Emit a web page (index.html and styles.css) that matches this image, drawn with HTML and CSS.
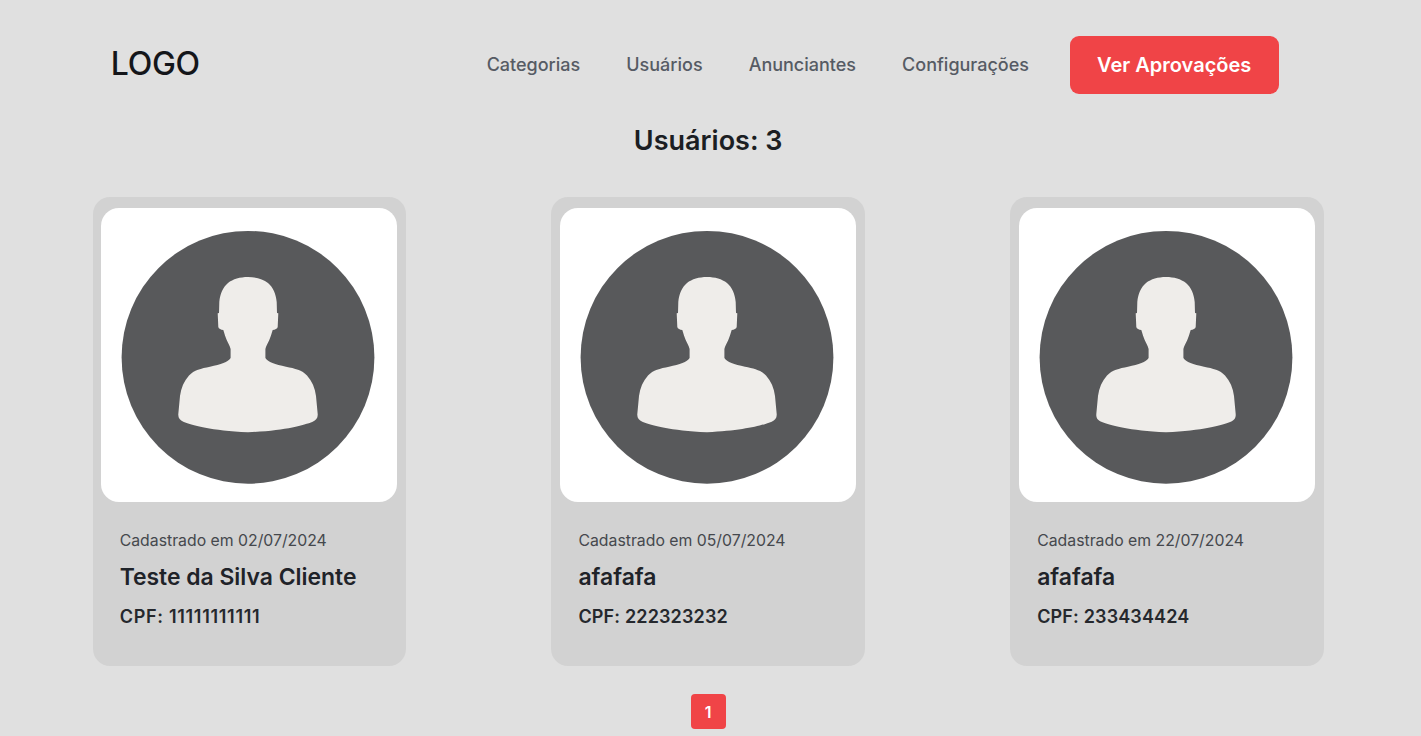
FILE: index.html
```html
<!DOCTYPE html>
<html lang="pt-BR">
<head>
  <meta charset="UTF-8">
  <meta name="viewport" content="width=device-width, initial-scale=1.0">
  <title>Usuários</title>
  <link rel="stylesheet" href="styles.css">
</head>
<body>
  <svg class="icon-defs" width="0" height="0" aria-hidden="true">
    <symbol id="avatar" viewBox="0 0 296 294">
      <circle cx="147" cy="149.3" r="126.4" fill="#58595b"/>
      <path fill="#efedea" d="M147 69C139 69 132 71 127 75C122 79 119 86 118.3 94L118 105L116.7 105.3L117.3 119C117.6 121 120 121.6 122.3 122C123.5 126 124.5 129 125.7 132C127 135 129 138 129.6 141L129.6 150C127 154 120 156.5 109 158.7C100 160.5 93 162 88 167.5C83 173 80 180 79 188L77.3 206C77 210 79 212.5 82.3 213.7C92 217.5 110 222.5 147 224.3C184 222.5 202 217.5 211.7 213.7C215 212.5 217 210 216.7 206L215 188C214 180 211 173 206 167.5C201 162 194 160.5 185 158.7C174 156.5 167 154 164.4 150L164.4 141C165 138 167 135 168.3 132C169.5 129 170.5 126 171.7 122C174 121.6 176.4 121 176.7 119L177.3 105.3L176 105L175.7 94C175 86 172 79 167 75C162 71 155 69 147 69Z"/>
    </symbol>
  </svg>

  <header class="topbar">
    <div class="logo">LOGO</div>
    <nav class="menu">
      <a href="#">Categorias</a>
      <a href="#">Usuários</a>
      <a href="#">Anunciantes</a>
      <a href="#">Configurações</a>
      <a href="#" class="btn-aprovar">Ver Aprovações</a>
    </nav>
  </header>

  <h1>Usuários: 3</h1>

  <main class="cards">
    <article class="card">
      <div class="foto"><svg><use href="#avatar"/></svg></div>
      <div class="info">
        <p class="data">Cadastrado em 02/07/2024</p>
        <h2>Teste da Silva Cliente</h2>
        <p class="cpf cpf-uns">CPF: 11111111111</p>
      </div>
    </article>
    <article class="card">
      <div class="foto"><svg><use href="#avatar"/></svg></div>
      <div class="info">
        <p class="data">Cadastrado em 05/07/2024</p>
        <h2>afafafa</h2>
        <p class="cpf">CPF: 222323232</p>
      </div>
    </article>
    <article class="card">
      <div class="foto"><svg><use href="#avatar"/></svg></div>
      <div class="info">
        <p class="data">Cadastrado em 22/07/2024</p>
        <h2>afafafa</h2>
        <p class="cpf">CPF: 233434424</p>
      </div>
    </article>
  </main>

  <div class="paginacao">
    <a href="#" class="pagina">1</a>
  </div>
</body>
</html>
```

FILE: styles.css
```css
html {
  overflow: hidden;
}
body {
  font-family: Inter, "Liberation Sans", sans-serif;
  margin: 0;
  padding: 0 97.3px 0 92.7px;
  background-color: #e0e0e0;
  color: #1f2329;
}
.icon-defs {
  position: absolute;
}
.topbar {
  display: flex;
  justify-content: space-between;
  align-items: center;
  padding: 36px 45px 0 18px;
}
.logo {
  margin-bottom: 4px;
  font-size: 32px;
  font-weight: 500;
  letter-spacing: -0.25px;
  color: #14161a;
}
.menu {
  display: flex;
  align-items: center;
  gap: 46px;
}
.menu a {
  margin-bottom: 2px;
  font-size: 18px;
  font-weight: 500;
  color: #565b64;
  text-decoration: none;
}
.menu .btn-aprovar {
  margin-bottom: 0;
  margin-left: -5.3px;
  width: 209px;
  height: 58px;
  display: flex;
  align-items: center;
  justify-content: center;
  background-color: #f04447;
  border-radius: 9px;
  color: #fff;
  font-size: 20px;
  font-weight: 600;
}
h1 {
  margin: 28px 0 0;
  font-size: 27px;
  line-height: 38px;
  font-weight: 600;
  text-align: center;
  color: #1b1e23;
}
.cards {
  display: flex;
  justify-content: space-between;
  margin-top: 37px;
}
.card {
  width: 313.5px;
  height: 469px;
  box-sizing: border-box;
  padding-top: 11px;
  background-color: #d2d2d2;
  border-radius: 17px;
}
.foto {
  width: 296px;
  height: 294px;
  margin: 0 auto;
  background-color: #fff;
  border-radius: 18px;
  overflow: hidden;
}
.foto svg {
  display: block;
  width: 100%;
  height: 100%;
}
.info {
  padding: 28px 0 0 27px;
}
.data {
  margin: 0;
  font-size: 15.8px;
  line-height: 22px;
  color: #45484d;
}
h2 {
  margin: 10px 0 0;
  font-size: 22.9px;
  line-height: 30px;
  font-weight: 600;
  color: #1f2329;
}
.cpf {
  margin: 13px 0 0;
  font-size: 18px;
  line-height: 24px;
  letter-spacing: 0.15px;
  font-weight: 600;
  color: #25282d;
}
.cpf-uns {
  letter-spacing: 0.7px;
}
.paginacao {
  display: flex;
  justify-content: center;
  margin-top: 28px;
}
.pagina {
  width: 35px;
  height: 35px;
  display: flex;
  align-items: center;
  justify-content: center;
  background-color: #f04447;
  border-radius: 4px;
  color: #fff;
  font-size: 16px;
  font-weight: 600;
  text-decoration: none;
}
```
